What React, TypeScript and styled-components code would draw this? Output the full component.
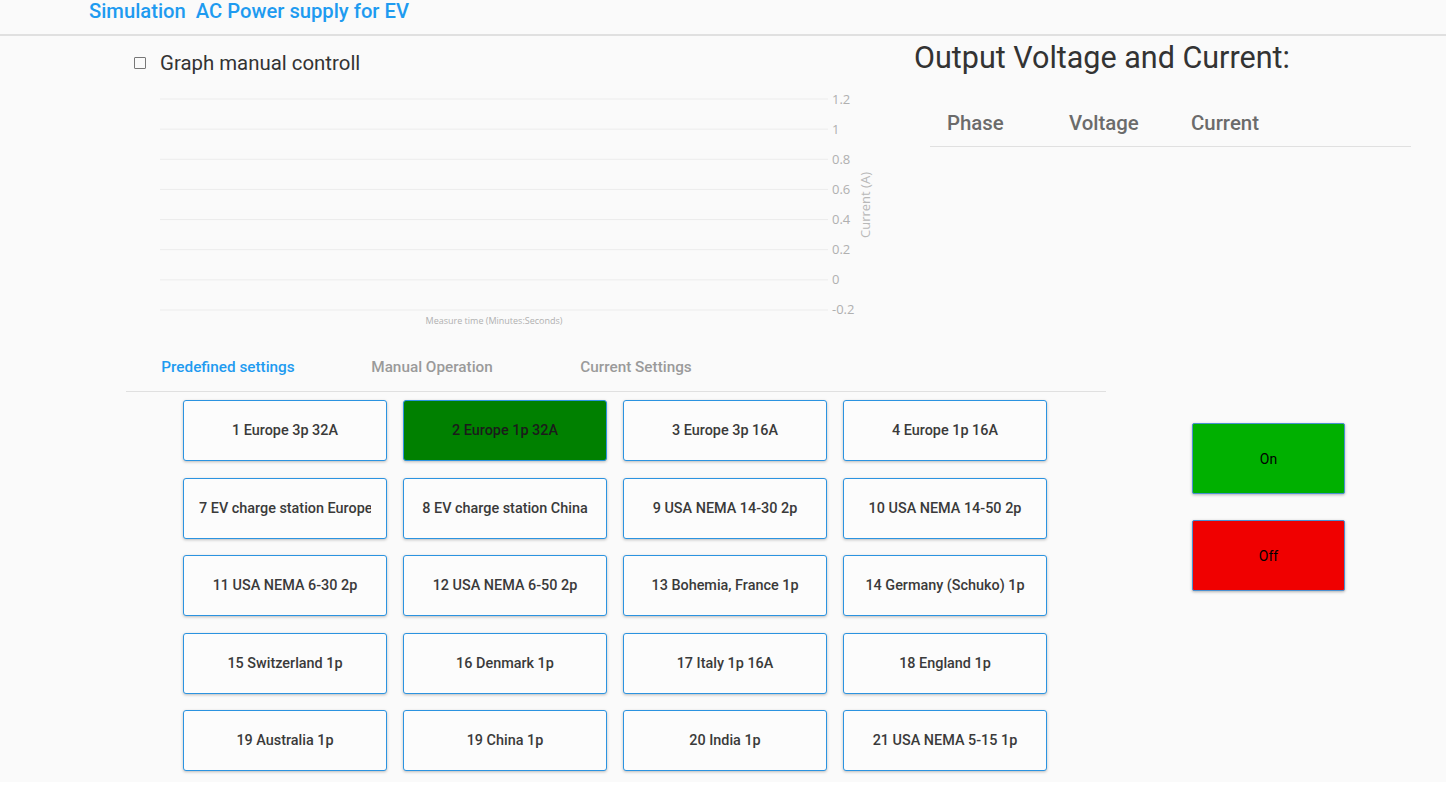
import styled, { createGlobalStyle } from "styled-components";

const GlobalStyle = createGlobalStyle`
  html, body {
    margin: 0;
    padding: 0;
    background: #ffffff;
    font-family: Roboto, "Liberation Sans", sans-serif;
  }
`;

const PRESETS = [
  "1 Europe 3p 32A",
  "2 Europe 1p 32A",
  "3 Europe 3p 16A",
  "4 Europe 1p 16A",
  "7 EV charge station Europe",
  "8 EV charge station China",
  "9 USA NEMA 14-30 2p",
  "10 USA NEMA 14-50 2p",
  "11 USA NEMA 6-30 2p",
  "12 USA NEMA 6-50 2p",
  "13 Bohemia, France 1p",
  "14 Germany (Schuko) 1p",
  "15 Switzerland 1p",
  "16 Denmark 1p",
  "17 Italy 1p 16A",
  "18 England 1p",
  "19 Australia 1p",
  "19 China 1p",
  "20 India 1p",
  "21 USA NEMA 5-15 1p",
];

const TICKS = ["1.2", "1", "0.8", "0.6", "0.4", "0.2", "0", "-0.2"];
const TABS = ["Predefined settings", "Manual Operation", "Current Settings"];

const Chart = () => {
  const top = 17;
  const step = 30.14;
  return (
    <ChartSvg width={780} height={260} viewBox="0 0 780 260">
      {TICKS.map((t, i) => {
        const y = top + i * step;
        return (
          <g key={t}>
            <line x1={34} x2={702} y1={y} y2={y} stroke="#ececec" strokeWidth={1} />
            <text x={706} y={y + 4.5} fontSize={13} fill="#b0b0b0" fontFamily="'Open Sans', sans-serif">
              {t}
            </text>
          </g>
        );
      })}
      <text
        transform="translate(744 123) rotate(-90)"
        textAnchor="middle"
        fontSize={13}
        fill="#b8b8b8"
        fontFamily="'Open Sans', sans-serif"
      >
        Current (A)
      </text>
      <text x={368} y={242} textAnchor="middle" fontSize={9} fill="#b0b0b0" fontFamily="'Open Sans', sans-serif">
        Measure time (Minutes:Seconds)
      </text>
    </ChartSvg>
  );
};

export default function App() {
  return (
    <Page>
      <GlobalStyle />
      <Header>
        <Title>Simulation  AC Power supply for EV</Title>
      </Header>

      <TopRow>
        <GraphPanel>
          <CheckRow>
            <Check />
            <CheckLabel>Graph manual controll</CheckLabel>
          </CheckRow>
          <Chart />
        </GraphPanel>
        <OutputPanel>
          <OutputTitle>Output Voltage and Current:</OutputTitle>
          <Table>
            <thead>
              <tr>
                <Th>Phase</Th>
                <Th>Voltage</Th>
                <Th>Current</Th>
                <Th />
              </tr>
            </thead>
          </Table>
        </OutputPanel>
      </TopRow>

      <BottomRow>
        <SettingsPanel>
          <TabBar>
            {TABS.map((t, i) => (
              <Tab key={t} $active={i === 0}>
                {t}
              </Tab>
            ))}
          </TabBar>
          <PresetGrid>
            {PRESETS.map((p, i) => (
              <PresetButton key={p} $selected={i === 1}>
                <PresetLabel>{p}</PresetLabel>
              </PresetButton>
            ))}
          </PresetGrid>
        </SettingsPanel>
        <PowerPanel>
          <PowerButton $color="#00b000">On</PowerButton>
          <PowerButton $color="#f00000">Off</PowerButton>
        </PowerPanel>
      </BottomRow>
    </Page>
  );
}

const Page = styled.div`
  background: #fafafa;
  height: 782px;
  overflow: hidden;
  color: #333;
`;

const Header = styled.header`
  height: 34px;
  border-bottom: 2px solid #e0e0e0;
  padding-left: 89px;
`;

const Title = styled.h1`
  margin: 0;
  font-size: 20.2px;
  line-height: 22px;
  font-weight: 500;
  color: #1e9bf0;
  white-space: pre;
`;

const TopRow = styled.div`
  display: flex;
  height: 306px;
`;

const GraphPanel = styled.div`
  margin-left: 126px;
  width: 780px;
  display: flex;
  flex-direction: column;
`;

const CheckRow = styled.label`
  display: flex;
  align-items: center;
  height: 24px;
  margin-top: 15px;
  padding-left: 8px;
`;

const Check = styled.span`
  width: 10px;
  height: 10px;
  border: 1.5px solid #777;
  border-radius: 1px;
  margin-right: 14px;
`;

const CheckLabel = styled.span`
  font-size: 20.4px;
  color: #333;
`;

const ChartSvg = styled.svg`
  display: block;
  margin-top: 7px;
`;

const OutputPanel = styled.div`
  margin-left: 8px;
  width: 500px;
`;

const OutputTitle = styled.h2`
  margin: 4px 0 0;
  font-size: 30.5px;
  line-height: 36px;
  font-weight: 400;
  color: #333;
`;

const Table = styled.table`
  margin-top: 24px;
  margin-left: 16px;
  width: 481px;
  border-collapse: collapse;
`;

const Th = styled.th`
  height: 46px;
  padding: 0 0 0 17px;
  width: 105px;
  text-align: left;
  font-size: 20.4px;
  font-weight: 500;
  color: #6b6b6b;
  border-bottom: 1px solid #e0e0e0;
  &:last-child {
    width: auto;
  }
`;

const BottomRow = styled.div`
  display: flex;
`;

const SettingsPanel = styled.div`
  margin-left: 126px;
  width: 980px;
`;

const TabBar = styled.div`
  display: flex;
  height: 49px;
  border-bottom: 1px solid #e0e0e0;
`;

const Tab = styled.div<{ $active?: boolean }>`
  width: 204px;
  display: flex;
  align-items: center;
  justify-content: center;
  font-size: 15.3px;
  font-weight: 500;
  color: ${(p) => (p.$active ? "#1e9bf0" : "#9a9a9a")};
`;

const PresetGrid = styled.div`
  display: grid;
  grid-template-columns: repeat(4, 204px);
  grid-auto-rows: 61px;
  column-gap: 16px;
  row-gap: 16.5px;
  margin: 8px 0 0 57px;
`;

const PresetButton = styled.button<{ $selected?: boolean }>`
  font-family: Roboto, "Liberation Sans", sans-serif;
  font-size: 14.4px;
  font-weight: 500;
  color: ${(p) => (p.$selected ? "#1b1b1b" : "#3a3a3a")};
  background: ${(p) => (p.$selected ? "#008000" : "#fcfcfc")};
  border: 1.5px solid #2b93e0;
  border-radius: 3px;
  box-shadow: 0 1px 3px rgba(0, 0, 0, 0.25);
  padding: 0 15px;
  min-width: 0;
`;

const PresetLabel = styled.span`
  display: block;
  overflow: hidden;
  white-space: nowrap;
  text-align: center;
`;

const PowerPanel = styled.div`
  margin-left: 86px;
  padding-top: 81px;
  display: flex;
  flex-direction: column;
  gap: 26px;
`;

const PowerButton = styled.button<{ $color: string }>`
  width: 153px;
  height: 71px;
  background: ${(p) => p.$color};
  border: 1px solid #4a90d0;
  border-radius: 2px;
  box-shadow: 0 1px 3px rgba(0, 0, 0, 0.3);
  font-family: Roboto, "Liberation Sans", sans-serif;
  font-size: 14px;
  color: #000;
`;
